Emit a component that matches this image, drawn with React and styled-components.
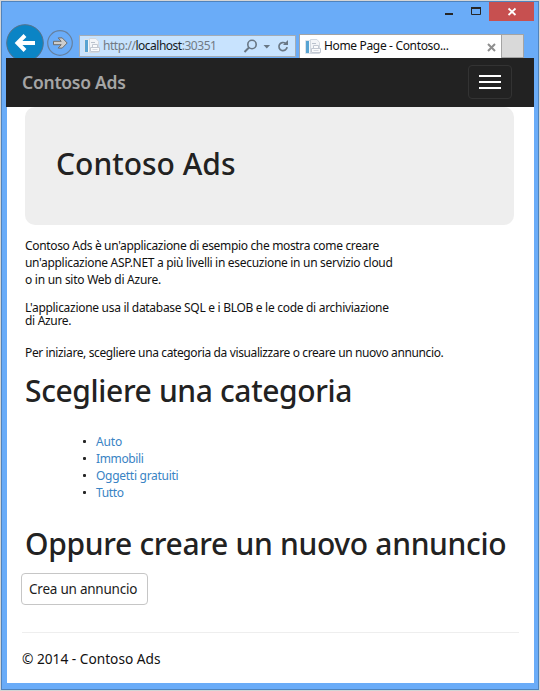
import React from 'react';
import styled, { createGlobalStyle } from 'styled-components';

const Global = createGlobalStyle`
  * { box-sizing: border-box; }
  body { margin: 0; background: #d5d5d5; font-family: "Noto Sans", sans-serif; color: #111; }
  h1, h2, p, ul { margin: 0; padding: 0; font-weight: 400; }
`;

const Frame = styled.div`
  width: 540px;
  height: 691px;
  padding: 1px;
  overflow: hidden;
`;

const Window = styled.div`
  display: flex;
  flex-direction: column;
  height: 689px;
  background: #6aacf8;
  border: 1px solid #4f83bd;
`;

const TitleBar = styled.div`
  display: flex;
  justify-content: flex-end;
  height: 19px;
  flex: none;
  padding-right: 4px;
`;

const Caption = styled.div`
  display: flex;
  width: ${(p) => p.$width}px;
  height: 19px;
  background: ${(p) => (p.$danger ? '#c75050' : 'transparent')};
`;

const AddressRow = styled.div`
  display: flex;
  align-items: flex-end;
  height: 37px;
  flex: none;
  padding-left: 4px;
  overflow: hidden;
`;

const NavButtons = styled.svg`
  display: block;
  width: 73px;
  height: 37px;
  flex: none;
`;

const AddressBox = styled.div`
  display: flex;
  align-items: center;
  width: 217px;
  height: 22px;
  margin-bottom: 1px;
  padding-left: 4px;
  background: #c8e3fe;
  border: 1px solid #a4acb5;
`;

const Url = styled.div`
  flex: none;
  width: 138px;
  margin: -1px 0 0 3px;
  font-size: 12px;
  line-height: 18px;
  letter-spacing: -0.45px;
  color: #717a84;
  white-space: nowrap;
`;

const Host = styled.span`
  color: #15191d;
  letter-spacing: -0.5px;
`;

const Tools = styled.svg`
  display: block;
  flex: none;
  width: 54px;
  height: 20px;
`;

const PageGlyph = styled.svg`
  display: block;
  width: 16px;
  height: 16px;
  flex: none;
`;

const Tab = styled.div`
  display: flex;
  align-items: center;
  width: 203px;
  height: 24px;
  margin-left: 3px;
  padding: 0 5px;
  background: #fff;
  border: 1px solid #a4a4a4;
  border-bottom: 0;
`;

const TabTitle = styled.div`
  flex: 1;
  margin: -1px 0 0 3px;
  font-size: 12px;
  line-height: 18px;
  letter-spacing: -0.34px;
  white-space: nowrap;
`;

const TabClose = styled.svg`
  display: block;
  width: 9px;
  height: 9px;
  margin-top: 1px;
`;

const NewTab = styled.div`
  width: 22px;
  height: 24px;
  background: #d9d9d9;
  border: 1px solid #a4a4a4;
  border-left: 0;
`;

const NavBar = styled.header`
  display: flex;
  align-items: center;
  justify-content: space-between;
  height: 49px;
  flex: none;
  margin: 0 4px;
  padding: 0 22px 1px 15px;
  background: #222;
`;

const Brand = styled.div`
  padding-left: 1px;
  font-size: 17.5px;
  font-weight: 600;
  line-height: 26px;
  letter-spacing: -0.25px;
  color: #a5a5a5;
`;

const Toggle = styled.button`
  display: flex;
  flex-direction: column;
  align-items: center;
  justify-content: center;
  gap: 4px;
  width: 44px;
  height: 34px;
  padding: 0;
  background: transparent;
  border: 1px solid #333;
  border-radius: 4px;
`;

const Bar = styled.span`
  width: 22px;
  height: 2px;
  background: #fff;
`;

const Page = styled.main`
  display: flex;
  flex-direction: column;
  height: 576px;
  flex: none;
  margin: 0 4px 0 5px;
  padding: 0 15px;
  background: #fff;
`;

const Banner = styled.section`
  height: 118px;
  width: 489px;
  margin-left: 3px;
  padding: 36px 31px;
  background: #eee;
  border-radius: 10px;
`;

const Heading = styled.h2`
  font-size: 30px;
  font-weight: 500;
  line-height: 41px;
  height: 40px;
  letter-spacing: ${(p) => p.$tracking}px;
  color: #222;
  white-space: nowrap;
`;

const Copy = styled.div`
  padding: 12px 0 0 3px;
`;

const Paragraph = styled.p`
  margin-bottom: ${(p) => p.$after}px;
  font-size: 12px;
  line-height: ${(p) => p.$leading}px;
`;

const Line = styled.span`
  display: block;
  letter-spacing: ${(p) => p.$tracking}px;
  white-space: nowrap;
`;

const Categories = styled.ul`
  display: grid;
  grid-auto-rows: 17px;
  margin: 23px 0 22px 58px;
  list-style: none;
`;

const Category = styled.li`
  display: flex;
  align-items: center;
  gap: 10px;
  font-size: 12px;
  line-height: 17px;

  &::before {
    content: '';
    width: 3px;
    height: 3px;
    border-radius: 1px;
    background: #262626;
  }
`;

const Link = styled.a`
  color: #3983c4;
  letter-spacing: ${(p) => p.$tracking}px;
`;

const CreateButton = styled.button`
  width: 127px;
  height: 32px;
  margin: 10px 0 27px -1px;
  padding: 0 0 1px 7px;
  background: #fff;
  border: 1px solid #c6c6c6;
  border-radius: 4px;
  font: 13.5px/20px "Noto Sans", sans-serif;
  letter-spacing: -0.23px;
  text-align: left;
  color: #1c1c1c;
`;

const Footer = styled.footer`
  width: 497px;
  padding-top: 16px;
  border-top: 1px solid #eee;
  font-size: 13.7px;
  line-height: 20px;
`;

const PageIcon = () => (
  <PageGlyph viewBox="0 0 16 16">
    <path d="M.5 1.5h9v13h-9z" fill="#f2f7fb" stroke="#dbe3ea" />
    <path d="M1 2h3v12H1z" fill="#57a3d2" />
    <path d="M5.5 .5h6.5l2.5 3v11h-9z" fill="#f3f5f8" stroke="#d3d9e0" />
    <path d="M7 4.5h4" stroke="#bac2cd" />
    <path d="M8.5 6.5h5v3h-5zM6.5 9.5h9v4h-9z" fill="#fafbfc" stroke="#c2c8d2" />
    <path d="M8.5 11.5h5" stroke="#d5d9e1" />
  </PageGlyph>
);

const categories = [
  ['Auto', -0.15],
  ['Immobili', -0.36],
  ['Oggetti gratuiti', -0.28],
  ['Tutto', -0.38],
];

export default function App() {
  return (
    <Frame>
      <Global />
      <Window>
        <TitleBar>
          <Caption $width={27}>
            <svg width="27" height="19"><path d="M10 12h8" stroke="#262626" strokeWidth="2" /></svg>
          </Caption>
          <Caption $width={27}>
            <svg width="27" height="19">
              <path d="M9.5 5v7.5h9V5" fill="none" stroke="#262626" />
              <path d="M9 6h10" stroke="#262626" strokeWidth="2" />
            </svg>
          </Caption>
          <Caption $width={45} $danger>
            <svg width="45" height="19"><path d="M19.5 6.5l7 6.5M26.5 6.5l-7 6.5" stroke="#fff" strokeWidth="1.8" /></svg>
          </Caption>
        </TitleBar>
        <AddressRow>
          <NavButtons viewBox="0 0 73 37">
            <circle cx="19" cy="22" r="18.3" fill="#0b84c5" stroke="#56728a" strokeWidth="1" />
            <path d="M11.5 22H29M19 14.5L11.500 22l7.5 7.5" fill="none" stroke="#fff" strokeWidth="4" />
            <circle cx="54" cy="22" r="12.3" fill="none" stroke="#66809f" strokeWidth="1.2" />
            <path d="M47.5 20.3h7.7l-3-3.4h4l5 5.1-5 5.1h-4l3-3.4h-7.700z" fill="#cdcdcd" stroke="#6d6d6d" />
          </NavButtons>
          <AddressBox>
            <PageIcon />
            <Url>http://<Host>localhost</Host>:30351</Url>
            <Tools viewBox="0 0 54 20">
              <circle cx="11" cy="8.5" r="4.2" fill="none" stroke="#697785" strokeWidth="1.6" />
              <path d="M8 11.5L3.5 16" stroke="#697785" strokeWidth="2" />
              <path d="M22.5 9h6.6l-3.3 3.5z" fill="#697785" />
              <path d="M44.6 7.4A4.1 4.1 0 1 0 46.1 11.2" fill="none" stroke="#697785" strokeWidth="1.7" />
              <path d="M42 9h5V4z" fill="#697785" />
            </Tools>
          </AddressBox>
          <Tab>
            <PageIcon />
            <TabTitle>Home Page - Contoso...</TabTitle>
            <TabClose viewBox="0 0 9 9">
              <path d="M1 1l7 7M8 1L1 8" stroke="#8e8e8e" strokeWidth="2" />
            </TabClose>
          </Tab>
          <NewTab />
        </AddressRow>
        <NavBar>
          <Brand>Contoso Ads</Brand>
          <Toggle aria-label="Menu"><Bar /><Bar /><Bar /></Toggle>
        </NavBar>
        <Page>
          <Banner>
            <Heading as="h1" $tracking={0}>Contoso Ads</Heading>
          </Banner>
          <Copy>
            <Paragraph $leading={17} $after={13}>
              <Line $tracking={-0.335}>Contoso Ads è un'applicazione di esempio che mostra come creare</Line>
              <Line $tracking={-0.3}>un'applicazione ASP.NET a più livelli in esecuzione in un servizio cloud</Line>
              <Line $tracking={-0.26}>o in un sito Web di Azure.</Line>
            </Paragraph>
            <Paragraph $leading={13} $after={17}>
              <Line $tracking={-0.297}>L'applicazione usa il database SQL e i BLOB e le code di archiviazione</Line>
              <Line $tracking={-0.32}>di Azure.</Line>
            </Paragraph>
            <Paragraph $leading={17} $after={9}>
              <Line $tracking={-0.38}>Per iniziare, scegliere una categoria da visualizzare o creare un nuovo annuncio.</Line>
            </Paragraph>
            <Heading $tracking={-0.37}>Scegliere una categoria</Heading>
            <Categories>
              {categories.map(([name, tracking]) => (
                <Category key={name}><Link $tracking={tracking}>{name}</Link></Category>
              ))}
            </Categories>
            <Heading $tracking={-0.32}>Oppure creare un nuovo annuncio</Heading>
          </Copy>
          <CreateButton>Crea un annuncio</CreateButton>
          <Footer>© 2014 - Contoso Ads</Footer>
        </Page>
      </Window>
    </Frame>
  );
}
